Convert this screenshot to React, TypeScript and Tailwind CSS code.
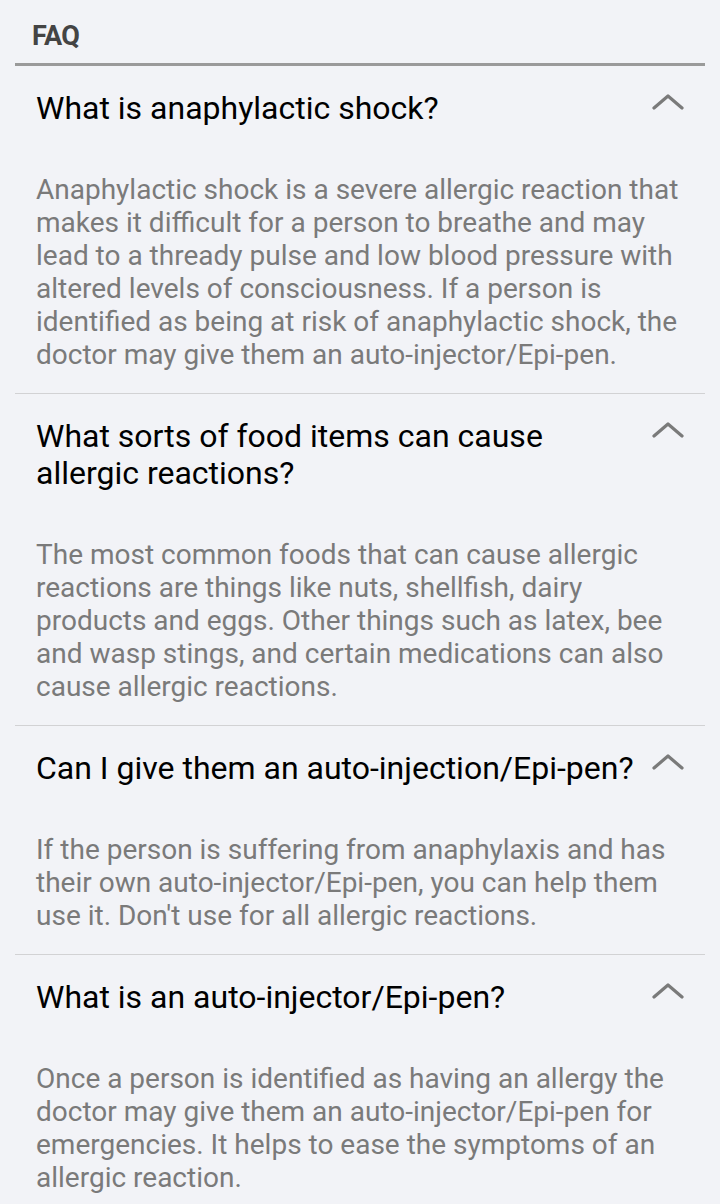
import React from 'react';

const faqs = [
    {
        q: "What is anaphylactic shock?",
        a: "Anaphylactic shock is a severe allergic reaction that makes it difficult for a person to breathe and may lead to a thready pulse and low blood pressure with altered levels of consciousness. If a person is identified as being at risk of anaphylactic shock, the doctor may give them an auto-injector/Epi-pen.",
    },
    {
        q: "What sorts of food items can cause allergic reactions?",
        a: "The most common foods that can cause allergic reactions are things like nuts, shellfish, dairy products and eggs. Other things such as latex, bee and wasp stings, and certain medications can also cause allergic reactions.",
    },
    {
        q: "Can I give them an auto-injection/Epi-pen?",
        a: "If the person is suffering from anaphylaxis and has their own auto-injector/Epi-pen, you can help them use it. Don't use for all allergic reactions.",
    },
    {
        q: "What is an auto-injector/Epi-pen?",
        a: "Once a person is identified as having an allergy the doctor may give them an auto-injector/Epi-pen for emergencies. It helps to ease the symptoms of an allergic reaction.",
    },
];

const Chevron = () => (
    <svg width="32" height="18" viewBox="0 0 32 18" className="shrink-0 mt-[3px]">
        <path d="M2 15 L16 3 L30 15" fill="none" stroke="#7a7a7a" strokeWidth="3.2" strokeLinecap="round" strokeLinejoin="round" />
    </svg>
);

const App = () => {
    return (
        <div className="min-h-[1204px] bg-[#f2f3f7] px-[15px] font-['Roboto',sans-serif]">
            <div className="pt-[21px] pb-[12px] pl-[17px]">
                <h2 className="text-[27px] font-bold text-[#444444] leading-[30px] tracking-[-0.5px]">FAQ</h2>
            </div>
            <div className="h-[3px] bg-[#9a9a9a]"></div>
            {faqs.map((item, i) => (
                <div key={i} className="border-b border-[#d2d2d4] pl-[21px] pr-[21px] pt-[24px] pb-[22px]">
                    <div className="flex justify-between items-start gap-[12px]">
                        <h3 className="text-[32px] leading-[37px] text-black font-normal">{item.q}</h3>
                        <Chevron />
                    </div>
                    <p className="mt-[46px] text-[28px] leading-[33px] text-[#7a7a7a]">{item.a}</p>
                </div>
            ))}
        </div>
    );
};

export default App;
